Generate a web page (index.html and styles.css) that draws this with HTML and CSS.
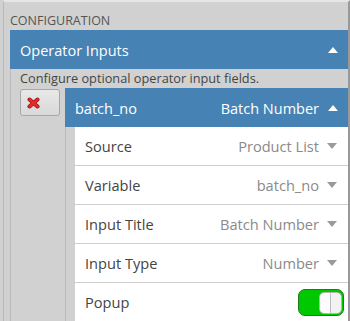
FILE: index.html
```html
<!DOCTYPE html>
<html lang="en">
<head>
  <meta charset="UTF-8">
  <meta name="viewport" content="width=device-width, initial-scale=1.0">
  <title>Configuration</title>
  <link rel="stylesheet" href="styles.css">
</head>
<body>
  <div class="panel">
    <div class="panel-title">CONFIGURATION</div>

    <!-- Operator Inputs section -->
    <div class="section">
      <div class="section-head">
        <span class="head-text">Operator Inputs</span>
        <span class="arrow-up"></span>
      </div>
      <div class="section-body">
        <p class="hint">Configure optional operator input fields.</p>

        <div class="input-row">
          <button class="remove-btn" type="button" title="Remove">
            <svg width="13" height="12" viewBox="0 0 13 12">
              <path d="M2.5 2.5 L10.5 9.5 M10.5 2.5 L2.5 9.5" stroke="#9c1414" stroke-width="4" stroke-linecap="round" fill="none"/>
              <path d="M2.5 2.5 L10.5 9.5 M10.5 2.5 L2.5 9.5" stroke="#e52b2b" stroke-width="2.4" stroke-linecap="round" fill="none"/>
            </svg>
          </button>

          <div class="item">
            <div class="item-head">
              <span class="head-text">batch_no</span>
              <span class="item-title">Batch Number</span>
              <span class="arrow-up"></span>
            </div>
            <div class="item-body">
              <div class="field">
                <span class="field-label">Source</span>
                <span class="field-value">Product List</span>
                <span class="caret"></span>
              </div>
              <div class="field">
                <span class="field-label">Variable</span>
                <span class="field-value">batch_no</span>
                <span class="caret"></span>
              </div>
              <div class="field">
                <span class="field-label">Input Title</span>
                <span class="field-value">Batch Number</span>
                <span class="caret"></span>
              </div>
              <div class="field">
                <span class="field-label">Input Type</span>
                <span class="field-value">Number</span>
                <span class="caret"></span>
              </div>
              <div class="field field-switch">
                <span class="field-label">Popup</span>
                <span class="toggle on"><span class="knob"></span></span>
              </div>
            </div>
          </div>
        </div>
      </div>
    </div>
  </div>
</body>
</html>
```

FILE: styles.css
```css
body {
  margin: 0;
  font-family: "Open Sans", "Liberation Sans", sans-serif;
  background-color: #d1d1d1;
  overflow: hidden;
}
.panel {
  margin-left: 3px;
  border-top: 2px solid #e6e6e6;
  border-left: 1px solid #bababa;
  border-right: 2px solid #999;
  padding-left: 6px;
  min-height: 330px;
}
.panel-title {
  padding-top: 9px;
  line-height: 19px;
  font-size: 12.5px;
  color: #555;
}
.section-head,
.item-head {
  display: flex;
  align-items: center;
  height: 39px;
  padding: 0 10px;
  background-color: #4682b4;
  color: #fff;
  font-size: 14.5px;
}
.head-text {
  flex: 1;
  padding-top: 1px;
}
.item-title {
  padding-top: 1px;
  margin-right: 9px;
}
.arrow-up {
  width: 0;
  height: 0;
  border-left: 5px solid transparent;
  border-right: 5px solid transparent;
  border-bottom: 6px solid #fff;
}
.section-body {
  border-left: 1px solid #bababa;
  padding-left: 9px;
}
.hint {
  margin: 0;
  line-height: 19px;
  font-size: 12.75px;
  color: #444;
}
.input-row {
  display: flex;
  align-items: flex-start;
}
.remove-btn {
  display: flex;
  align-items: center;
  width: 40px;
  height: 27px;
  margin: 1px 5px 0 0;
  padding: 0 0 0 6px;
  background: linear-gradient(#e8e8e8, #d9d9d9);
  border: 1px solid #a6a6a6;
  border-radius: 3px;
  cursor: pointer;
}
.item {
  flex: 1;
}
.item-body {
  border-left: 1px solid #bababa;
  padding-left: 9px;
}
.field {
  display: flex;
  align-items: center;
  height: 38px;
  padding: 0 11px 0 10px;
  background-color: #fff;
  border-bottom: 1px solid #cfcfcf;
  font-size: 14.6px;
}
.field-label {
  flex: 1;
  color: #444;
}
.field-value {
  color: #8a8a8a;
  margin-right: 8px;
}
.caret {
  width: 0;
  height: 0;
  border-left: 5px solid transparent;
  border-right: 5px solid transparent;
  border-top: 6px solid #9a9a9a;
}
.field-switch {
  padding-right: 4px;
}
.toggle {
  display: flex;
  justify-content: flex-end;
  align-items: center;
  box-sizing: border-box;
  width: 46px;
  height: 27px;
  padding: 1px;
  border: 1px solid #1d7d1d;
  border-radius: 7px;
  background-color: #cfcfcf;
}
.toggle.on {
  background-color: #00c800;
}
.knob {
  box-sizing: border-box;
  width: 23px;
  height: 22px;
  margin-top: 1px;
  border: 1px solid #b5b5b5;
  border-radius: 5px;
  background: linear-gradient(to right, #fdfdfd 48%, #bdbdbd 48%, #bdbdbd 53%, #f2f2f2 53%);
}
```
